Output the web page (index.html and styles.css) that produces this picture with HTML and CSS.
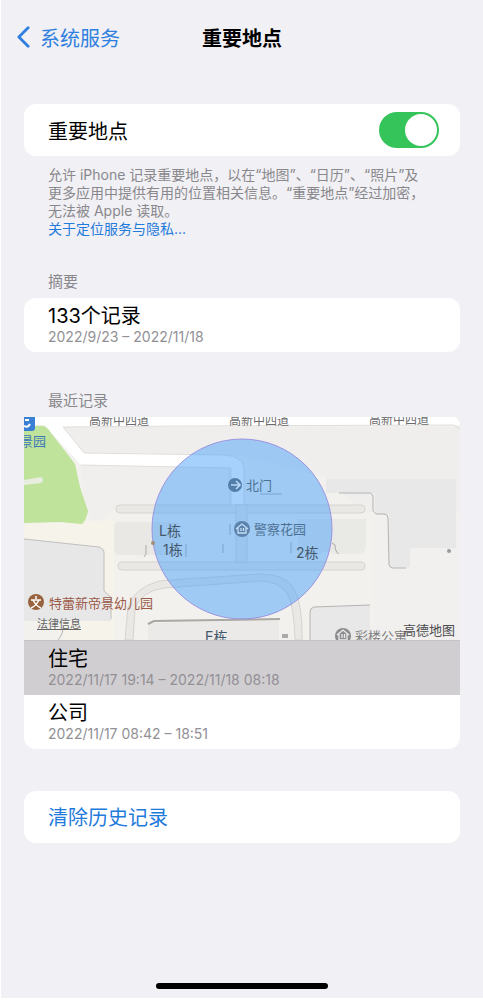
FILE: index.html
```html
<!DOCTYPE html>
<html lang="zh-CN">
<head>
    <meta charset="UTF-8">
    <meta name="viewport" content="width=device-width, initial-scale=1.0">
    <title>重要地点</title>
    <link rel="stylesheet" href="styles.css">
</head>
<body>
    <div class="screen">
        <header class="navbar">
            <a class="back" href="#">
                <svg class="chevron" viewBox="0 0 14 24" aria-hidden="true">
                    <path d="M12 2 L2 12 L12 22" fill="none" stroke="currentColor" stroke-width="3" stroke-linecap="round" stroke-linejoin="round"/>
                </svg>
                系统服务
            </a>
            <h1 class="title">重要地点</h1>
        </header>

        <main class="content">
            <div class="card toggle-row">
                <label for="locations">重要地点</label>
                <input class="switch" type="checkbox" role="switch" id="locations" checked>
            </div>
            <div class="note">
                <p>允许 iPhone 记录重要地点，以在“地图”、“日历”、“照片”及更多应用中提供有用的位置相关信息。“重要地点”经过加密，无法被 Apple 读取。</p>
                <a href="#">关于定位服务与隐私...</a>
            </div>

            <h2 class="section-title">摘要</h2>
            <div class="card row">
                <div class="row-title">133个记录</div>
                <div class="row-date">2022/9/23 – 2022/11/18</div>
            </div>

            <h2 class="section-title recent">最近记录</h2>
            <div class="card history">
                <div class="map">
                    <svg class="map-canvas" viewBox="0 0 436 223" role="img" aria-label="地图">
                        <rect width="436" height="223" fill="#f2f1ee"/>

                        <!-- blocks -->
                        <path d="M60 36 L39 10 H436 V95 H341 L300 60 L216 38 L130 36 Z" fill="#efeeed"/>
                        <path d="M56 48 L206 51 V88 H96 L70 106 L62 92 Z" fill="#f0efee"/>
                        <path d="M350 100 H436 V223 H350 Z" fill="#f1f0ee"/>
                        <path d="M64 104 H90 V223 H40 V130 L0 122 V107 Z" fill="#f5f3ea"/>

                        <!-- park -->
                        <path d="M0 9 H20 Q25 10 27 16 L51 47 L56 70 L64 94 Q62 104 58 107 L36 105 L0 106 Z" fill="#bfe39a"/>
                        <path d="M0 63 L17 60 Q21 63 17 66 L0 68 Z" fill="#e8ede0"/>

                        <!-- streets -->
                        <path d="M0 0 H431 Q436 4 436 8 L39 10 L60 36 L200 38 Q219 39 220 51 V88 H208 V51 L57 48 L24 12 L20 8 H0 Z" fill="#ffffff"/>
                        <path d="M39 10 L60 36 L200 38 Q219 39 220 51 V88 M57 48 L206 51 V88 M39 10 L160 9 L430 8 L436 12" fill="none" stroke="#e0dedc"/>

                        <!-- buildings -->
                        <path d="M0 122 L75 130 Q81 132 80 138 V174 L87 180 V204 H0 Z" fill="#e8e7e8"/>
                        <path d="M0 122 L75 130 Q81 132 80 138 V174 L87 180 V202" fill="none" stroke="#c0bfbe"/>
                        <path d="M302 62 H432 V131 H386 V150 H365 V97 H351 V76 H302 Z" fill="#e8e8e8"/>
                        <path d="M315 76 H346 Q349 77 349 80 V94 L352 97 H360 Q364 97 364 101 L365 148 Q366 151 369 151 H382" fill="none" stroke="#b4b3b2"/>
                        <rect x="90" y="105" width="66" height="33" rx="5" fill="#e9e8e5"/>
                        <path d="M274 102 H342 V130 Q341 137 334 137 H310 Q300 132 295 138 H274 Z" fill="#e9e9e6"/>
                        <path d="M308 126 L311 128 Q311 135 315 137 M122 128 V137 L120 140" fill="none" stroke="#aaa9a5"/>
                        <path d="M286 195 Q286 191 290 190 L346 188 V223 H286 Z" fill="#e9e8e8"/>
                        <path d="M286 223 V195 Q286 191 290 190 L346 188" fill="none" stroke="#b5b4b3"/>
                        <path d="M124 206 L255 203 V223 H124 Z" fill="#ebeae9"/>
                        <path d="M124 207 L130 204 L256 202" fill="none" stroke="#aaa8a4" stroke-width="2"/>
                        <path d="M39 208 Q40 216 34 223" fill="none" stroke="#b5b4b3"/>

                        <!-- footpaths -->
                        <g fill="#e9e8e5" stroke="#d5d4d0">
                            <rect x="92" y="88" width="249" height="8" rx="4"/>
                            <rect x="94" y="145" width="247" height="8" rx="4"/>
                            <rect x="212" y="88" width="11" height="57"/>
                            <path d="M101 223 L104 190 Q110 171 135 164 L160 162 L236 157 Q260 157 269 170 Q279 186 278 223 H271 Q270 187 263 176 Q255 165 238 164 L140 171 Q117 174 111 192 L109 223 Z"/>
                        </g>
                        <path d="M236 77 H258 M206 107 V118 M199 127 V136 M162 127 V140 M267 125 V136" fill="none" stroke="#aaa"/>
                        <circle cx="425" cy="134" r="2" fill="#999"/>
                        <rect x="258" y="217" width="6" height="4" fill="#aaa"/>

                        <!-- accuracy area -->
                        <circle cx="218" cy="112" r="90" fill="#469ffa" fill-opacity="0.48" stroke="#9c94e0" stroke-width="1"/>
                        <circle cx="129" cy="126" r="2" fill="#a28e79"/>

                        <!-- markers -->
                        <path d="M0 0 H11 V11 Q11 14 8 14 H0 Z" fill="#397fd3"/>
                        <path d="M0 9 Q4 11 6 7 M1 3 H5" fill="none" stroke="#fff" stroke-width="2"/>
                        <circle cx="12" cy="185" r="8" fill="#98633f"/>
                        <path d="M12 179 V182 M7 183 H17 M9 183 Q12 189 17 191 M15 183 Q12 189 7 191" fill="none" stroke="#fff" stroke-width="1.5"/>
                        <circle cx="211" cy="68" r="7" fill="#527da9"/>
                        <path d="M207 68 H215 M212 64 L216 68 L212 72" fill="none" stroke="#b8d8f8" stroke-width="1.6"/>
                        <circle cx="218" cy="112" r="8" fill="#5b83ad"/>
                        <path d="M212 112 L218 107 L224 112 M214 111 V116 H222 V111 M217 111 V114 M219.5 111 V114" fill="none" stroke="#c5def5" stroke-width="1.3"/>
                        <circle cx="319" cy="219" r="8" fill="#8c8c8e"/>
                        <path d="M313 218 L319 213 L325 218 M315 217 V223 H323 V217 M318 217 V221 M320.5 217 V221" fill="none" stroke="#eee" stroke-width="1.3"/>

                        <!-- labels -->
                        <g class="street-label">
                            <text x="65" y="8">高新中四道</text>
                            <text x="205" y="8">高新中四道</text>
                            <text x="345" y="7">高新中四道</text>
                        </g>
                        <g class="place-label">
                            <text class="park" x="-4" y="29">景园</text>
                            <text class="school" x="25" y="191">特蕾新帝景幼儿园</text>
                            <text class="in-area" x="222" y="73">北门</text>
                            <text class="in-area" x="230" y="117">警察花园</text>
                            <text x="331" y="224">彩楼公寓</text>
                        </g>
                        <g class="building-label">
                            <text x="135" y="119">L栋</text>
                            <text x="139" y="138">1栋</text>
                            <text x="272" y="141">2栋</text>
                            <text x="181" y="225">E栋</text>
                        </g>
                        <text class="map-brand" x="379" y="218">高德地图</text>
                    </svg>
                    <a class="legal" href="#">法律信息</a>
                </div>
                <div class="row selected">
                    <div class="row-title">住宅</div>
                    <div class="row-date">2022/11/17 19:14 – 2022/11/18 08:18</div>
                </div>
                <div class="row">
                    <div class="row-title">公司</div>
                    <div class="row-date">2022/11/17 08:42 – 18:51</div>
                </div>
            </div>

            <button class="card clear" type="button">清除历史记录</button>
        </main>

        <div class="home-bar"></div>
    </div>
</body>
</html>
```
FILE: styles.css
```css
* {
    box-sizing: border-box;
}
body {
    margin: 0;
    background-color: #fff;
    font-family: Inter, "Noto Sans CJK SC", sans-serif;
    color: #000;
}
.screen {
    display: flex;
    flex-direction: column;
    min-height: calc(100vh - 2px);
    margin-left: 1px;
    background-color: #f1f0f4;
}
h1, h2, p {
    margin: 0;
}
a {
    color: #1f7bdc;
    text-decoration: none;
}

/* top bar */
.navbar {
    display: grid;
    grid-template-columns: 1fr auto 1fr;
    align-items: center;
    height: 74px;
    padding: 0 16px;
}
.back {
    display: flex;
    align-items: center;
    gap: 10px;
    font-size: 20px;
    color: #2f7fe0;
}
.chevron {
    width: 13px;
    height: 24px;
}
.title {
    font-size: 20px;
    font-weight: 700;
}

.content {
    flex: 1;
    padding: 30px 23px 0;
}
.card {
    background-color: #fff;
    border-radius: 12px;
    overflow: hidden;
}

/* switch */
.toggle-row {
    display: flex;
    align-items: center;
    justify-content: space-between;
    height: 52px;
    padding: 0 21px 0 24px;
    font-size: 20px;
}
.switch {
    appearance: none;
    width: 60px;
    height: 36px;
    margin: 0;
    padding: 2px;
    border-radius: 18px;
    background-color: #34c45a;
    cursor: pointer;
}
.switch::before {
    content: "";
    display: block;
    width: 32px;
    height: 32px;
    border-radius: 50%;
    background-color: #fff;
}
.switch:checked::before {
    margin-left: auto;
}
.switch:not(:checked) {
    background-color: #dddce1;
}

.note {
    padding: 10px 30px 0 24px;
    font-size: 14px;
    line-height: 18px;
    color: #89888d;
}
.note a {
    display: block;
}
.section-title {
    margin-top: 34px;
    padding: 0 24px 6px;
    font-size: 15px;
    font-weight: 400;
    line-height: 20px;
    color: #89888d;
}
.recent {
    margin-top: 39px;
}

/* rows */
.row {
    padding: 6px 24px;
}
.row-title {
    font-size: 20px;
    line-height: 24px;
}
.row-date {
    font-size: 14px;
    line-height: 18px;
    color: #919095;
}
.selected {
    background-color: #d1ced2;
    border-top: 1px solid #c4c2c5;
}
.history {
    border-radius: 0 0 12px 12px;
}

/* map */
.map {
    position: relative;
}
.map-canvas {
    display: block;
    width: 100%;
}
.street-label {
    font-size: 12px;
    fill: #6a6a6c;
}
.place-label {
    font-size: 13px;
    fill: #808082;
}
.place-label .park {
    fill: #3f78b8;
}
.place-label .school {
    fill: #9b5a48;
}
.place-label .in-area {
    fill: #4d7193;
}
.building-label {
    font-size: 14px;
    fill: #45586b;
}
.map-brand {
    font-size: 13px;
    fill: #4c4c4e;
}
.legal {
    position: absolute;
    left: 13px;
    bottom: 8px;
    font-size: 11px;
    line-height: 16px;
    color: #666;
    text-decoration: underline;
}

.clear {
    display: block;
    width: 100%;
    height: 52px;
    margin-top: 42px;
    padding: 0 24px 2px;
    border: none;
    font-family: inherit;
    font-size: 20px;
    text-align: left;
    color: #1f7bdc;
    cursor: pointer;
}
.home-bar {
    width: 172px;
    height: 6px;
    margin: 20px auto 9px;
    border-radius: 3px;
    background-color: #000;
}
```
